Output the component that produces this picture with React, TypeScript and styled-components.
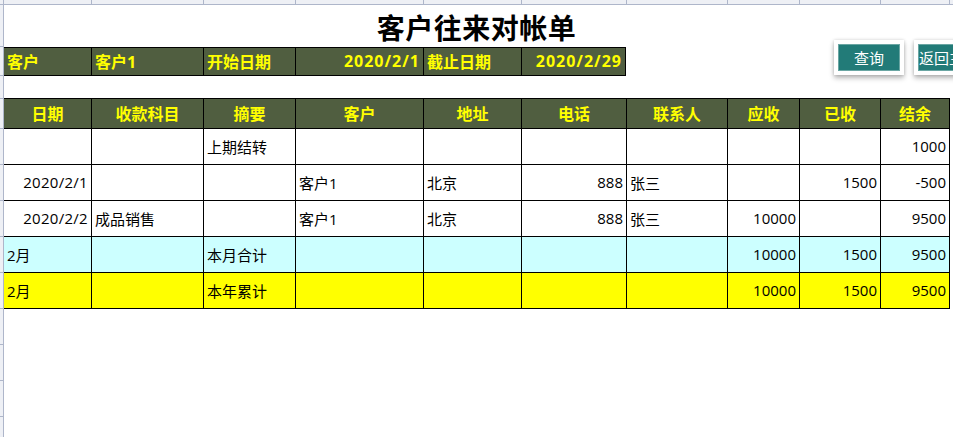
import React from "react";
import styled, { createGlobalStyle } from "styled-components";

const GlobalStyle = createGlobalStyle`
  html, body { margin: 0; padding: 0; background: #ffffff; }
  body { font-family: "Open Sans", "Noto Sans CJK SC", sans-serif; }
`;

const COLS = [88, 112, 92, 128, 98, 105, 101, 72, 81, 69];
const STRIP_ROWS = [42, 29, 23, 30, 36, 36, 36, 36, 36, 36, 36, 36, 36];

const Page = styled.div`
  width: 953px;
  height: 437px;
  overflow: hidden;
  display: grid;
  grid-template-columns: 4px 1fr;
  grid-template-rows: 5px 1fr;
  background: #fff;
`;

const Corner = styled.div`
  background: #eef0f5;
  border-right: 1px solid #aeb6ca;
  border-bottom: 1px solid #aeb6ca;
  box-sizing: border-box;
`;

const ColStrip = styled.div`
  display: flex;
  background: #eef0f5;
  border-bottom: 1px solid #aeb6ca;
  box-sizing: border-box;
  height: 5px;
`;

const ColStripCell = styled.div<{ $w: number }>`
  flex: 0 0 ${(p) => p.$w}px;
  box-sizing: border-box;
  border-right: 1px solid #aeb6ca;
`;

const RowStrip = styled.div`
  display: flex;
  flex-direction: column;
  background: #eef0f5;
  border-right: 1px solid #aeb6ca;
  box-sizing: border-box;
`;

const RowStripCell = styled.div<{ $h: number }>`
  flex: 0 0 ${(p) => p.$h}px;
  box-sizing: border-box;
  border-bottom: 1px solid #aeb6ca;
`;

const Sheet = styled.div`
  position: relative;
  display: flex;
  flex-direction: column;
`;

const Title = styled.h1`
  margin: 0;
  width: 945px;
  height: 42px;
  display: flex;
  align-items: center;
  justify-content: center;
  font-family: "Noto Sans CJK SC", sans-serif;
  font-size: 28px;
  font-weight: 700;
  color: #000;
  padding-top: 1px;
  box-sizing: border-box;
  letter-spacing: 0.5px;
`;

const Spacer = styled.div<{ $h: number }>`
  height: ${(p) => p.$h}px;
`;

const Row = styled.div<{ $bg?: string; $h: number; $top?: boolean }>`
  display: flex;
  background: ${(p) => p.$bg || "#fff"};
  height: ${(p) => p.$h}px;
  border-bottom: 1px solid #000;
  border-top: ${(p) => (p.$top ? "1px solid #000" : "none")};
  box-sizing: content-box;
  width: fit-content;
`;

const Cell = styled.div<{
  $w: number;
  $align?: "left" | "right" | "center";
  $head?: boolean;
  $num?: boolean;
}>`
  flex: 0 0 ${(p) => p.$w}px;
  box-sizing: border-box;
  border-right: 1px solid #000;
  display: flex;
  align-items: center;
  justify-content: ${(p) =>
    p.$align === "right" ? "flex-end" : p.$align === "center" ? "center" : "flex-start"};
  padding: 0 3px 1px 3px;
  font-size: ${(p) => (p.$head ? "16px" : "15px")};
  font-weight: ${(p) => (p.$head ? 700 : 400)};
  color: ${(p) => (p.$head ? "#ffff00" : "#000")};
  letter-spacing: ${(p) => (p.$num ? (p.$head ? "1px" : "0.3px") : "0")};
  white-space: nowrap;
  overflow: hidden;
`;

const ButtonBar = styled.div`
  position: absolute;
  left: 830px;
  top: 35px;
  display: flex;
  gap: 10px;
`;

const ButtonFrame = styled.div`
  flex: 0 0 70px;
  height: 35px;
  box-sizing: border-box;
  padding: 4px;
  background: #fff;
  box-shadow: 0 3px 5px rgba(0, 0, 0, 0.28), 0 0 3px rgba(0, 0, 0, 0.15);
`;

const Button = styled.button`
  width: 62px;
  height: 27px;
  margin: 0;
  padding: 0;
  background: #227b78;
  border: 1px solid #6aa6a3;
  color: #fff;
  font-family: "Noto Sans CJK SC", sans-serif;
  font-size: 15px;
  display: flex;
  align-items: center;
  justify-content: center;
  white-space: nowrap;
  overflow: hidden;
`;

type Align = "left" | "right" | "center";
const ALIGN: Align[] = ["right", "left", "left", "left", "left", "right", "left", "right", "right", "right"];

const HEAD = ["日期", "收款科目", "摘要", "客户", "地址", "电话", "联系人", "应收", "已收", "结余"];

const DATA: { bg?: string; cells: string[]; alignFirst?: Align }[] = [
  { cells: ["", "", "上期结转", "", "", "", "", "", "", "1000"] },
  { cells: ["2020/2/1", "", "", "客户1", "北京", "888", "张三", "", "1500", "-500"] },
  { cells: ["2020/2/2", "成品销售", "", "客户1", "北京", "888", "张三", "10000", "", "9500"] },
  { bg: "#ccffff", cells: ["2月", "", "本月合计", "", "", "", "", "10000", "1500", "9500"], alignFirst: "left" },
  { bg: "#ffff00", cells: ["2月", "", "本年累计", "", "", "", "", "10000", "1500", "9500"], alignFirst: "left" },
];

const INFO: { text: string; w: number; align: Align; num?: boolean }[] = [
  { text: "客户", w: 88, align: "left" },
  { text: "客户1", w: 112, align: "left" },
  { text: "开始日期", w: 92, align: "left" },
  { text: "2020/2/1", w: 128, align: "right", num: true },
  { text: "截止日期", w: 98, align: "left" },
  { text: "2020/2/29", w: 104, align: "right", num: true },
];

const OLIVE = "#505e40";

export default function App() {
  return (
    <>
      <GlobalStyle />
      <Page>
        <Corner />
        <ColStrip>
          {COLS.map((w, i) => (
            <ColStripCell key={i} $w={w} />
          ))}
        </ColStrip>
        <RowStrip>
          {STRIP_ROWS.map((h, i) => (
            <RowStripCell key={i} $h={h} />
          ))}
        </RowStrip>
        <Sheet>
          <Title>客户往来对帐单</Title>
          <Row $bg={OLIVE} $h={27} $top>
            {INFO.map((c, i) => (
              <Cell key={i} $w={c.w} $align={c.align} $head $num={c.num}>
                {c.text}
              </Cell>
            ))}
          </Row>
          <Spacer $h={22} />
          <Row $bg={OLIVE} $h={29} $top>
            {HEAD.map((h, i) => (
              <Cell key={i} $w={COLS[i]} $align="center" $head>
                {h}
              </Cell>
            ))}
          </Row>
          {DATA.map((r, ri) => (
            <Row key={ri} $bg={r.bg} $h={35}>
              {r.cells.map((c, i) => (
                <Cell
                  key={i}
                  $w={COLS[i]}
                  $align={i === 0 && r.alignFirst ? r.alignFirst : ALIGN[i]}
                  $num={i === 0 && !r.alignFirst}
                >
                  {c}
                </Cell>
              ))}
            </Row>
          ))}
          <ButtonBar>
            <ButtonFrame>
              <Button>查询</Button>
            </ButtonFrame>
            <ButtonFrame>
              <Button>返回主页</Button>
            </ButtonFrame>
          </ButtonBar>
        </Sheet>
      </Page>
    </>
  );
}
